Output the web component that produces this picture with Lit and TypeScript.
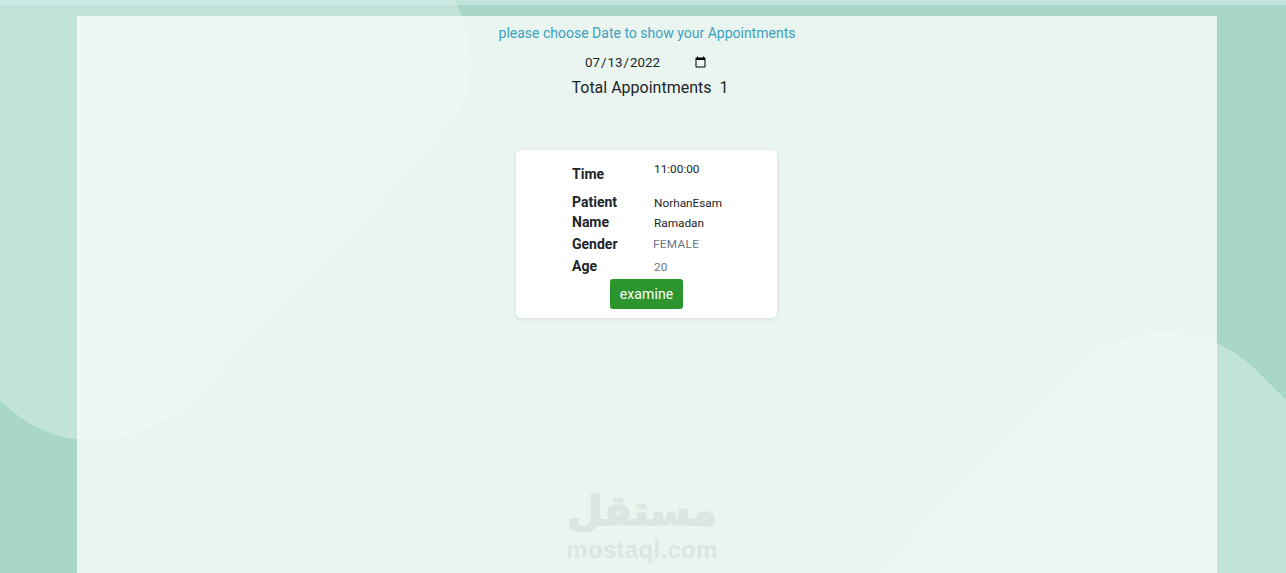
import { LitElement, html, css } from "lit";
import { customElement } from "lit/decorators.js";

@customElement("app-root")
export class AppRoot extends LitElement {
  static styles = css`
    :host {
      display: block;
      position: relative;
      height: 100vh;
      overflow: hidden;
      background: #a8d8c5;
      font-family: Roboto, "Liberation Sans", sans-serif;
      color: #212529;
    }
    .bg {
      position: absolute;
      inset: 0;
      width: 100%;
      height: 100%;
    }
    .strip {
      position: absolute;
      top: 0;
      left: 0;
      right: 0;
      height: 5px;
      background: rgba(214, 236, 240, 0.55);
    }
    .panel {
      position: relative;
      box-sizing: border-box;
      width: 1140px;
      height: 557px;
      margin: 16px 0 0 77px;
      padding-top: 7px;
      background: rgba(248, 250, 249, 0.83);
      display: flex;
      flex-direction: column;
      align-items: center;
    }
    .hint {
      font-size: 14px;
      line-height: 21px;
      color: #3a9fc1;
    }
    .date {
      box-sizing: border-box;
      width: 125px;
      height: 24px;
      margin: 7px 1px 0 0;
      padding: 0;
      border: none;
      outline: none;
      background: transparent;
      font: 13.33px Roboto, sans-serif;
      color: #212529;
    }
    .total {
      display: flex;
      gap: 8px;
      padding-left: 6px;
      font-size: 16px;
      line-height: 24px;
      margin-top: 1px;
    }
    .card {
      box-sizing: border-box;
      width: 261px;
      height: 168px;
      margin: 50px 1px 0 0;
      padding: 12px 0 0 56px;
      background: #fff;
      border-radius: 5px;
      box-shadow: 0 1px 4px rgba(0, 0, 0, 0.1);
      display: flex;
      flex-direction: column;
      font-size: 11.8px;
    }
    .row {
      display: grid;
      grid-template-columns: 82px 110px;
    }
    .row.time {
      height: 30px;
    }
    .row.patient {
      height: 42px;
    }
    .row.gender,
    .row.age {
      height: 22px;
    }
    .label {
      font-size: 14px;
      font-weight: 700;
      line-height: 20px;
      color: #212529;
    }
    .time .label {
      padding-top: 2px;
    }
    .value {
      line-height: 20px;
      padding-top: 1px;
    }
    .time .value {
      line-height: 14px;
      padding-top: 0;
    }
    .muted {
      color: #6c757d;
    }
    .gender .value {
      margin-left: -1px;
      letter-spacing: 0.3px;
      line-height: 18px;
    }
    .btn {
      align-self: flex-start;
      width: 73px;
      height: 30px;
      margin: 1px 0 0 38px;
      padding: 0;
      border: none;
      border-radius: 3px;
      background: #2c952e;
      color: #fff;
      font: 14px Roboto, sans-serif;
      letter-spacing: 0.1px;
    }
    .mark {
      position: absolute;
      left: 490px;
      top: 470px;
      width: 150px;
      display: flex;
      flex-direction: column;
      align-items: center;
      color: #dbe5e2;
      font-weight: 700;
    }
    .mark .ar {
      font-family: "DejaVu Sans", sans-serif;
      font-size: 41px;
      line-height: 51px;
      -webkit-text-stroke: 1.5px #dbe5e2;
    }
    .mark .en {
      font-family: "Liberation Sans", sans-serif;
      font-size: 24px;
      line-height: 26px;
      letter-spacing: 0.3px;
    }
  `;

  render() {
    return html`
      <svg class="bg" viewBox="0 0 1286 573" aria-hidden="true">
        <g fill="#c2e4d7">
          <path
            d="M455 0 C468 27 473 60 469 80 C467 92 465 100 462 107 L352 232 L180 410 C150 432 120 440 90 440 C55 440 25 425 0 400 L0 0 Z"
          />
          <path
            d="M880 573 L1075 370 C1100 345 1135 333 1165 333 C1200 333 1230 345 1256 370 L1286 400 L1286 573 Z"
          />
        </g>
      </svg>
      <div class="strip"></div>
      <main class="panel">
        <div class="hint">please choose Date to show your Appointments</div>
        <input class="date" type="date" value="2022-07-13" />
        <div class="total"><span>Total Appointments</span><span>1</span></div>
        <section class="card">
          <div class="row time">
            <div class="label">Time</div>
            <div class="value">11:00:00</div>
          </div>
          <div class="row patient">
            <div class="label">Patient<br />Name</div>
            <div class="value">NorhanEsam<br />Ramadan</div>
          </div>
          <div class="row gender">
            <div class="label">Gender</div>
            <div class="value muted">FEMALE</div>
          </div>
          <div class="row age">
            <div class="label">Age</div>
            <div class="value muted">20</div>
          </div>
          <button class="btn">examine</button>
        </section>
        <div class="mark">
          <div class="ar">مستقل</div>
          <div class="en">mostaql.com</div>
        </div>
      </main>
    `;
  }
}
